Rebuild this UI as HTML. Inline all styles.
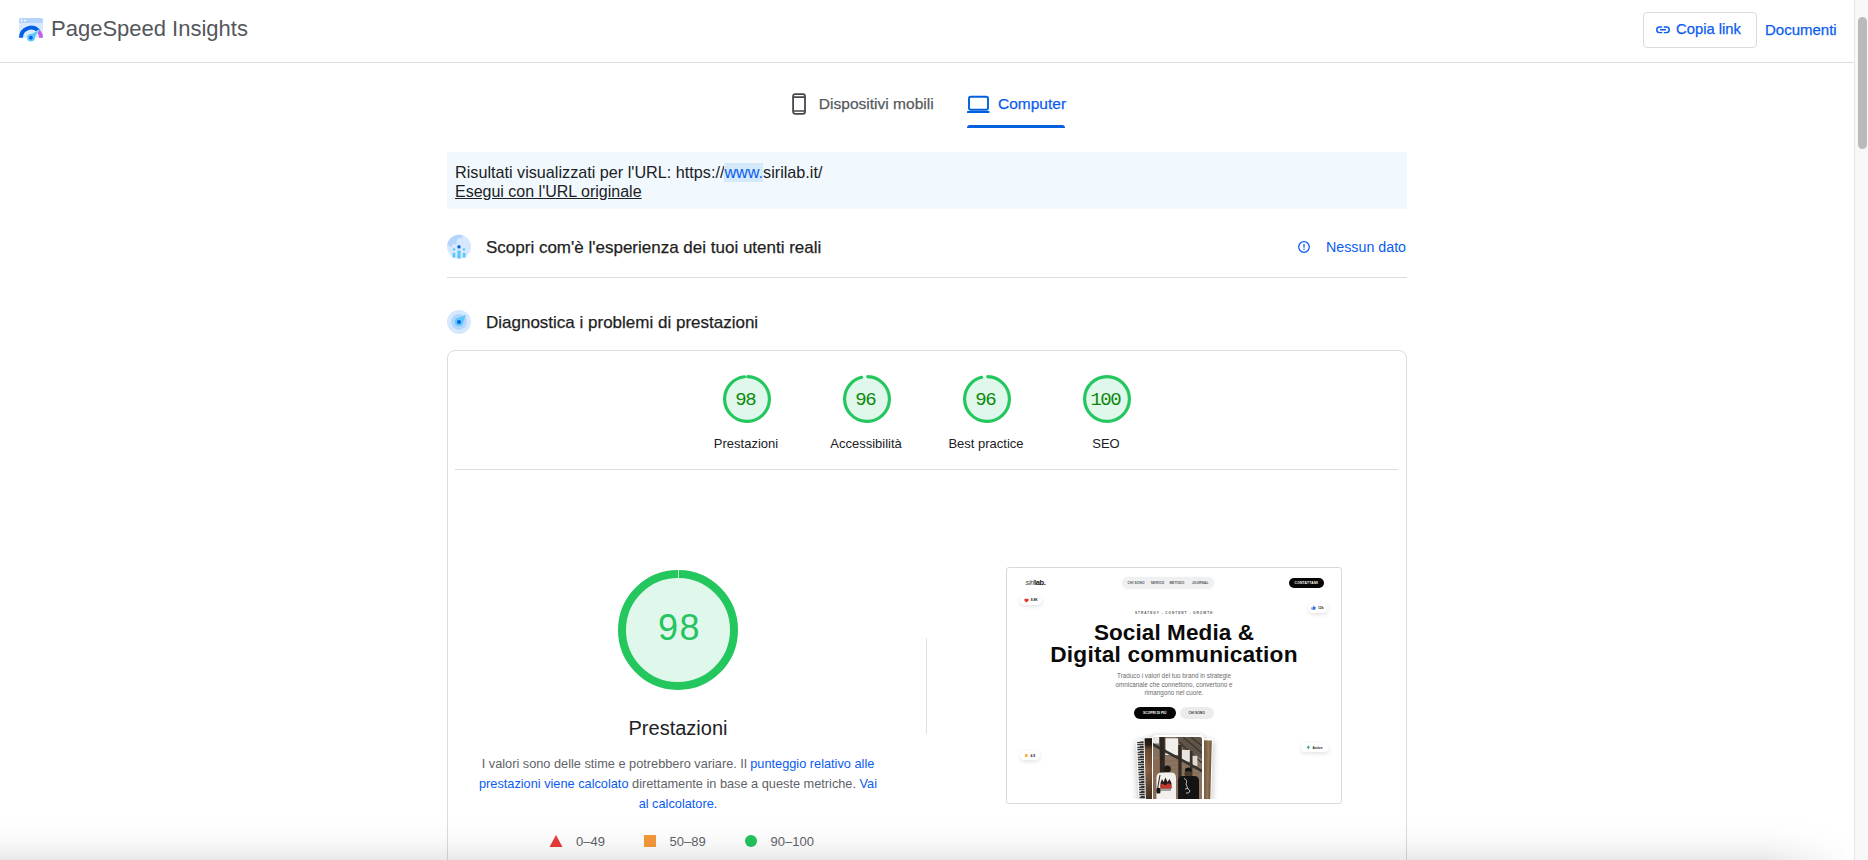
<!DOCTYPE html>
<html><head><meta charset="utf-8">
<style>
*{box-sizing:border-box;margin:0;padding:0}
html,body{width:1868px;height:860px;overflow:hidden;background:#fff;font-family:"Liberation Sans",sans-serif;position:relative}
.a{position:absolute;white-space:nowrap;line-height:1}
.blue{color:#0a5cf0}
.med{-webkit-text-stroke:0.25px currentColor}
#hdr{position:absolute;left:0;top:0;width:1854px;height:63px;border-bottom:1px solid #dadce0}
#sb{position:absolute;left:1854px;top:0;width:14px;height:860px;background:#f8f8f8;border-left:1px solid #e6e6e6}
#thumb{position:absolute;left:3px;top:17px;width:8.5px;height:132px;background:#bababa;border-radius:4.5px}
#urlbox{position:absolute;left:447px;top:152px;width:960px;height:57px;background:#f1f9fe}
.hr{position:absolute;height:1px;background:#dadce0}
#card{position:absolute;left:447px;top:350px;width:960px;height:600px;border:1px solid #dadce0;border-radius:8px}
.glabel{position:absolute;font-size:13px;color:#202124;text-align:center;width:120px;line-height:1}
.gnum{position:absolute;font-family:"Liberation Mono",monospace;font-size:19px;color:#0a880a;text-align:center;width:60px;line-height:1;letter-spacing:-1.5px;text-indent:-1.5px}
</style></head><body>

<div id="hdr"></div>
<!-- logo -->
<svg class="a" style="left:14px;top:12px" width="36" height="36" viewBox="0 0 36 36">
  <path d="M5 25.7 V8 A2 2 0 0 1 7 6 H27 A2 2 0 0 1 29 8 V25.7 Z" fill="#d9e9fd"/>
  <path d="M5 11 V8 A2 2 0 0 1 7 6 H27 A2 2 0 0 1 29 8 V11 Z" fill="#b4d5fb"/>
  <circle cx="7.6" cy="8.5" r="0.9" fill="#fff"/>
  <rect x="10.2" y="7.8" width="1.8" height="1.5" fill="#fff"/>
  <path d="M7 25.7 A10 10 0 0 1 27 25.7" stroke="#f0f7ff" stroke-width="5.4" fill="none"/>
  <path d="M7 25.7 A10 10 0 0 1 24.66 19.27" stroke="#0360e8" stroke-width="4" fill="none"/>
  <path d="M24.66 19.27 A10 10 0 0 1 27 25.7" stroke="#c05cf0" stroke-width="4" fill="none"/>
  <path d="M14.3 23.6 L24.9 17.8 L20 28 Z" fill="#5ac8fa" stroke="#f0f7ff" stroke-width="0.5"/>
  <circle cx="16.9" cy="25.7" r="3.8" fill="#5ac8fa"/>
  <circle cx="16.9" cy="25.7" r="1.9" fill="#0360e8"/>
</svg>
<div class="a" style="left:51px;top:17.8px;font-size:22px;color:#53575c">PageSpeed Insights</div>

<!-- copia link -->
<div style="position:absolute;left:1643px;top:12px;width:114px;height:36px;border:1px solid #dadce0;border-radius:4px"></div>
<svg class="a" style="left:1655px;top:24px" width="16" height="12" viewBox="0 0 16 12">
  <path d="M7.2 2.9 H4.6 A2.85 2.85 0 0 0 4.6 8.6 H7.2 M8.8 2.9 H11.4 A2.85 2.85 0 0 1 11.4 8.6 H8.8" stroke="#0a5cf0" stroke-width="1.45" fill="none"/>
  <rect x="5" y="5.05" width="6" height="1.5" rx="0.2" fill="#0a5cf0"/>
</svg>
<div class="a blue med" style="left:1676px;top:22.4px;font-size:14.8px">Copia link</div>
<div class="a blue med" style="left:1765px;top:21.6px;font-size:15px">Documenti</div>

<div id="sb"><div id="thumb"></div></div>

<!-- tabs -->
<svg class="a" style="left:790px;top:92px" width="18" height="24" viewBox="0 0 18 24">
  <rect x="3.1" y="2.1" width="11.9" height="19.7" rx="2" stroke="#44474e" stroke-width="1.8" fill="none"/>
  <path d="M3.1 5.1 H15 M3.1 19 H15" stroke="#44474e" stroke-width="1.6"/>
</svg>
<div class="a med" style="left:818.8px;top:95.8px;font-size:15.55px;color:#55595e">Dispositivi mobili</div>
<svg class="a" style="left:965px;top:94px" width="28" height="22" viewBox="0 0 28 22">
  <rect x="4" y="2.8" width="19" height="12.9" rx="1.6" stroke="#0360dc" stroke-width="1.9" fill="none"/>
  <rect x="2" y="17" width="22.5" height="2" rx="0.6" fill="#0360dc"/>
</svg>
<div class="a blue med" style="left:998px;top:95.8px;font-size:15.5px">Computer</div>
<div style="position:absolute;left:967px;top:125px;width:98px;height:3px;background:#0360dc;border-radius:3px 3px 0 0"></div>

<!-- url box -->
<div id="urlbox"></div>
<div class="a" style="left:455px;top:163.8px;font-size:16.2px;color:#202124">Risultati visualizzati per l'URL: https://<span style="background:#d4eafa;color:#0a5cf0;padding-bottom:1px">www.</span>sirilab.it/</div>
<div class="a" style="left:455px;top:184.2px;font-size:16px;color:#202124;text-decoration:underline">Esegui con l'URL originale</div>

<!-- section 1 -->
<svg class="a" style="left:443px;top:231px" width="32" height="32" viewBox="0 0 32 32">
  <circle cx="16" cy="15.8" r="12" fill="#d6e8fd"/>
  <path d="M4.3 13.5 A12 12 0 0 1 20.3 4.6 L18.8 6.6 L14 8.2 L13.3 13.2 L9.4 13.3 L8.4 16.8 Z" fill="#b3d5fb"/>
  <g stroke="#e4effd" stroke-width="0.7">
  <circle cx="16" cy="15.9" r="2.1" fill="#0360e8"/>
  <circle cx="11" cy="18.35" r="1.65" fill="#5ac8fa"/>
  <circle cx="21" cy="18.35" r="1.65" fill="#5ac8fa"/>
  <rect x="14" y="19.1" width="4" height="8.7" fill="#5ac8fa"/>
  <rect x="9.1" y="21.3" width="3.7" height="5.6" fill="#5ac8fa"/>
  <rect x="19.2" y="21.3" width="3.7" height="5.6" fill="#5ac8fa"/>
  </g>
</svg>
<div class="a med" style="left:486px;top:239.4px;font-size:17px;color:#1f1f1f">Scopri com'è l'esperienza dei tuoi utenti reali</div>
<svg class="a" style="left:1296px;top:239px" width="16" height="16" viewBox="0 0 16 16">
  <circle cx="8" cy="8" r="5.3" stroke="#0a5cf0" stroke-width="1.3" fill="none"/>
  <rect x="7.35" y="5" width="1.3" height="3.6" fill="#0a5cf0"/>
  <rect x="7.35" y="9.6" width="1.3" height="1.3" fill="#0a5cf0"/>
</svg>
<div class="a blue" style="left:1326px;top:239.9px;font-size:14.25px">Nessun dato</div>
<div class="hr" style="left:447px;top:277px;width:960px"></div>

<!-- section 2 -->
<svg class="a" style="left:443px;top:306px" width="32" height="32" viewBox="0 0 32 32">
  <circle cx="16" cy="15.9" r="12" fill="#d6e8fd"/>
  <circle cx="16" cy="15.9" r="7.9" fill="#b3d5fb"/>
  <path d="M23 8.8 L19.6 17.8 L14.2 12.4 Z" fill="#5ac8fa"/>
  <circle cx="16" cy="15.9" r="4.1" fill="#5ac8fa"/>
  <circle cx="16" cy="15.9" r="2" fill="#0360e8"/>
</svg>
<div class="a med" style="left:486px;top:314.4px;font-size:17px;color:#1f1f1f">Diagnostica i problemi di prestazioni</div>

<!-- card -->
<div id="card"></div>

<!-- small gauges -->
<svg class="a" style="left:722.6px;top:375px" width="48" height="48" viewBox="0 0 120 120">
  <circle cx="60" cy="60" r="56" fill="#e0f8eb"/>
  <circle cx="60" cy="60" r="56" stroke="#24c65e" stroke-width="8" fill="none" stroke-dasharray="340.82 351.86" stroke-linecap="round" transform="rotate(-87.954 60 60)"/>
</svg>
<div class="gnum" style="left:716px;top:390.6px">98</div>
<div class="glabel" style="left:686px;top:437px">Prestazioni</div>

<svg class="a" style="left:842.6px;top:375px" width="48" height="48" viewBox="0 0 120 120">
  <circle cx="60" cy="60" r="56" fill="#e0f8eb"/>
  <circle cx="60" cy="60" r="56" stroke="#24c65e" stroke-width="8" fill="none" stroke-dasharray="333.78 351.86" stroke-linecap="round" transform="rotate(-87.954 60 60)"/>
</svg>
<div class="gnum" style="left:836px;top:390.6px">96</div>
<div class="glabel" style="left:806px;top:437px">Accessibilità</div>

<svg class="a" style="left:962.6px;top:375px" width="48" height="48" viewBox="0 0 120 120">
  <circle cx="60" cy="60" r="56" fill="#e0f8eb"/>
  <circle cx="60" cy="60" r="56" stroke="#24c65e" stroke-width="8" fill="none" stroke-dasharray="333.78 351.86" stroke-linecap="round" transform="rotate(-87.954 60 60)"/>
</svg>
<div class="gnum" style="left:956px;top:390.6px">96</div>
<div class="glabel" style="left:926px;top:437px">Best practice</div>

<svg class="a" style="left:1082.6px;top:375px" width="48" height="48" viewBox="0 0 120 120">
  <circle cx="60" cy="60" r="56" fill="#e0f8eb"/>
  <circle cx="60" cy="60" r="56" stroke="#24c65e" stroke-width="8" fill="none"/>
</svg>
<div class="gnum" style="left:1076px;top:390.6px">100</div>
<div class="glabel" style="left:1046px;top:437px">SEO</div>

<div class="hr" style="left:455px;top:469px;width:943px"></div>

<!-- big gauge -->
<svg class="a" style="left:618.3px;top:570.3px" width="120" height="120" viewBox="0 0 120 120">
  <circle cx="60" cy="60" r="56" fill="#e0f8eb"/>
  <circle cx="60" cy="60" r="56" stroke="#24c65e" stroke-width="8" fill="none" stroke-dasharray="350.5 351.86" transform="rotate(-89.1 60 60)"/>
</svg>
<div class="a" style="left:578.8px;top:610px;width:200px;text-align:center;font-size:36px;color:#26c460;letter-spacing:1.6px;text-indent:1.6px">98</div>
<div class="a" style="left:578px;top:718.2px;width:200px;text-align:center;font-size:20px;color:#202124">Prestazioni</div>
<div class="a" style="left:428px;top:753.6px;width:500px;text-align:center;font-size:12.75px;line-height:20px;color:#5f6368;white-space:normal">I valori sono delle stime e potrebbero variare. Il <span class="blue">punteggio relativo alle</span><br><span class="blue">prestazioni viene calcolato</span> direttamente in base a queste metriche. <span class="blue">Vai</span><br><span class="blue">al calcolatore.</span></div>

<!-- legend -->
<svg class="a" style="left:549px;top:834px" width="14" height="14" viewBox="0 0 14 14"><path d="M7 1 L13.5 13 H0.5 Z" fill="#eb3a3a"/></svg>
<div class="a" style="left:576px;top:834.5px;font-size:13px;color:#5f6368">0–49</div>
<div style="position:absolute;left:644px;top:835px;width:12px;height:12px;background:#f6993a"></div>
<div class="a" style="left:669.5px;top:834.5px;font-size:13px;color:#5f6368">50–89</div>
<div style="position:absolute;left:745px;top:835px;width:12px;height:12px;border-radius:50%;background:#22c55e"></div>
<div class="a" style="left:770.5px;top:834.5px;font-size:13px;color:#5f6368">90–100</div>

<div style="position:absolute;left:926px;top:637.5px;width:1px;height:96.5px;background:#e0e0e0"></div>

<!-- screenshot thumbnail -->
<div id="shot" style="position:absolute;left:1006px;top:567px;width:336px;height:237px;border:1px solid #d9d9d9;border-radius:3px;overflow:hidden;background:#fff">
 <div style="position:absolute;left:0;top:0;width:334px;height:235px;overflow:hidden">
  <div class="a" style="left:18.5px;top:10.5px;font-size:7.5px;color:#111;letter-spacing:-0.3px"><i style="font-weight:normal;color:#444">siri</i><b>lab.</b></div>
  <div style="position:absolute;left:114.5px;top:9px;width:92px;height:11.5px;background:#eef0f2;border-radius:6px;box-shadow:0 0 3px rgba(0,0,0,0.04)"></div>
  <div class="a" style="left:120.5px;top:14.2px;font-size:3.3px;color:#555;font-weight:bold;letter-spacing:0.1px">CHI SONO</div>
  <div class="a" style="left:143.8px;top:14.2px;font-size:3.3px;color:#555;font-weight:bold;letter-spacing:0.1px">SERVIZI</div>
  <div class="a" style="left:162.5px;top:14.2px;font-size:3.3px;color:#555;font-weight:bold;letter-spacing:0.1px">METODO</div>
  <div class="a" style="left:184.9px;top:14.2px;font-size:3.3px;color:#555;font-weight:bold;letter-spacing:0.1px">JOURNAL</div>
  <div style="position:absolute;left:281.5px;top:9.7px;width:35.5px;height:10px;background:#050505;border-radius:5px"></div>
  <div class="a" style="left:287.5px;top:14px;font-size:3.3px;color:#fff;font-weight:bold;letter-spacing:0.25px">CONTATTAMI</div>
  <div style="position:absolute;left:12.7px;top:27.1px;width:22.7px;height:10.3px;background:#fff;border-radius:5px;box-shadow:0 1.5px 4px rgba(0,0,0,0.12)"></div>
  <svg class="a" style="left:16.8px;top:29.8px" width="5" height="5" viewBox="0 0 10 10"><path d="M5 9.2 L1.2 5.4 A2.4 2.4 0 0 1 5 2.2 A2.4 2.4 0 0 1 8.8 5.4 Z" fill="#e0352b"/></svg>
  <div class="a" style="left:23.7px;top:31.4px;font-size:3.3px;color:#222;font-weight:bold">8.8K</div>
  <div style="position:absolute;left:300.8px;top:35px;width:20.6px;height:10px;background:#fff;border-radius:5px;box-shadow:0 1.5px 4px rgba(0,0,0,0.12)"></div>
  <svg class="a" style="left:304.3px;top:37.4px" width="5" height="5" viewBox="0 0 10 10"><path d="M1 4.5 H3 V9.5 H1 Z M3.8 4.5 L5.8 0.8 Q7 0.8 6.8 2.5 L6.4 4 H8.8 Q9.6 4.2 9.4 5 L8.4 8.9 Q8.2 9.5 7.5 9.5 H3.8 Z" fill="#2f6fe4"/></svg>
  <div class="a" style="left:311px;top:38.5px;font-size:3.3px;color:#222;font-weight:bold">12k</div>
  <div class="a" style="left:128px;top:43.5px;font-size:3.2px;color:#555;font-weight:bold;letter-spacing:0.95px">STRATEGY - CONTENT - GROWTH</div>
  <div class="a" style="left:0;top:54.4px;width:334px;text-align:center;font-size:22.5px;font-weight:bold;color:#0a0a0a;letter-spacing:0.1px">Social Media &amp;</div>
  <div class="a" style="left:0;top:75px;width:334px;text-align:center;font-size:22.7px;font-weight:bold;color:#0a0a0a;letter-spacing:0.2px">Digital communication</div>
  <div class="a" style="left:0;top:105.3px;width:334px;text-align:center;font-size:6.3px;color:#6b6b6b">Traduco i valori del tuo brand in strategie</div>
  <div class="a" style="left:0;top:114px;width:334px;text-align:center;font-size:6.3px;color:#6b6b6b">omnicanale che connettono, convertono e</div>
  <div class="a" style="left:0;top:122.1px;width:334px;text-align:center;font-size:6.3px;color:#6b6b6b">rimangono nel cuore.</div>
  <div style="position:absolute;left:126.5px;top:138.5px;width:42.5px;height:12.5px;background:#050505;border-radius:6.5px"></div>
  <div class="a" style="left:126.5px;top:143.8px;width:42.5px;text-align:center;font-size:3.3px;color:#fff;font-weight:bold">SCOPRI DI PIÙ</div>
  <div style="position:absolute;left:172.6px;top:138.5px;width:34px;height:12.5px;background:#ececec;border-radius:6.5px"></div>
  <div class="a" style="left:172.6px;top:143.8px;width:34px;text-align:center;font-size:3.3px;color:#333;font-weight:bold">CHI SONO</div>
  <div style="position:absolute;left:12.8px;top:183.2px;width:20.3px;height:8.8px;background:#fff;border-radius:4.5px;box-shadow:0 1.5px 4px rgba(0,0,0,0.12)"></div>
  <svg class="a" style="left:16.8px;top:185.4px" width="4.6" height="4.6" viewBox="0 0 10 10"><path d="M5 0.5 L6.3 3.6 L9.6 3.8 L7.1 6 L7.9 9.3 L5 7.5 L2.1 9.3 L2.9 6 L0.4 3.8 L3.7 3.6 Z" fill="#f5a00f"/></svg>
  <div class="a" style="left:23.4px;top:186.7px;font-size:3.3px;color:#222;font-weight:bold">4.9</div>
  <div style="position:absolute;left:294.2px;top:175.2px;width:27.7px;height:8.9px;background:#fff;border-radius:4.5px;box-shadow:0 1.5px 4px rgba(0,0,0,0.12)"></div>
  <svg class="a" style="left:299px;top:177.4px" width="4.6" height="4.8" viewBox="0 0 10 10"><path d="M6 0 L1 5.8 H4.6 L3.6 10 L9 3.8 H5.4 Z" fill="#1e9e5a"/></svg>
  <div class="a" style="left:305.6px;top:179.1px;font-size:3.3px;color:#222;font-weight:bold">Active</div>
  <!-- cards -->
  <div style="position:absolute;left:132px;top:170.6px;width:28px;height:70px;background:#fff;border-radius:3.5px;box-shadow:-1px 2px 6px rgba(0,0,0,0.22);transform:rotate(-2.5deg);transform-origin:50% 100%;overflow:hidden">
    <div style="position:absolute;left:1.3px;top:1.5px;width:7px;height:70px;background:repeating-linear-gradient(to bottom,#3a3a3a 0,#3a3a3a 1.2px,#bdbdbd 1.2px,#bdbdbd 2.5px)"></div>
  </div>
  <div style="position:absolute;left:137.8px;top:169.4px;width:30px;height:70px;background:#fff;border-radius:3.5px;box-shadow:-1px 2px 6px rgba(0,0,0,0.22);transform:rotate(-1.2deg);transform-origin:50% 100%;overflow:hidden">
    <div style="position:absolute;left:1.3px;top:1.3px;width:28px;height:70px;background:linear-gradient(to bottom,#1e1a16 0,#2a2018 9%,#6d4c34 16%,#8a6446 45%,#5a3e2a 75%,#3a2a1e 100%)"></div>
  </div>
  <div style="position:absolute;left:173.5px;top:170.4px;width:30px;height:70px;background:#fff;border-radius:3.5px;box-shadow:1px 2px 6px rgba(0,0,0,0.22);transform:rotate(1.5deg);transform-origin:50% 100%;overflow:hidden">
    <div style="position:absolute;left:1.3px;top:1.5px;width:27.5px;height:70px;background:linear-gradient(to right,#4a3826,#7c5f44 70%,#9a7a58 90%,#6a5038)"></div>
  </div>
  <div style="position:absolute;left:144.8px;top:167.4px;width:52.3px;height:70px;background:#fff;border-radius:4px;box-shadow:0 2px 7px rgba(0,0,0,0.28);overflow:hidden">
    <svg style="position:absolute;left:1.7px;top:1.7px;border-radius:3px 3px 0 0" width="49" height="62" viewBox="0 0 49 62">
      <rect width="49" height="62" fill="#86705e"/>
      <rect x="0" y="20" width="49" height="42" fill="#8c7460"/>
      <path d="M0 24 H49 M0 28 H49 M0 32 H49 M0 36 H49 M0 40 H49 M0 44 H49 M0 48 H49" stroke="#6e5848" stroke-width="0.6" opacity="0.6"/>
      <path d="M23 0 H49 V22 L30 12 Z" fill="#5f5448"/>
      <path d="M30 0 L49 16 M38 0 L49 9 M26 5 L49 26" stroke="#3a342e" stroke-width="1.2"/>
      <rect x="0" y="0" width="6" height="6.5" fill="#e9e8e4"/>
      <rect x="12.6" y="1.3" width="12.5" height="16.7" fill="#f0efec"/>
      <rect x="28.9" y="13" width="8" height="11.7" fill="#e6e5e1"/>
      <rect x="39.4" y="18.8" width="5" height="10.1" fill="#dcdad6"/>
      <path d="M0 6 L49 32.5 L49 35.5 L0 9 Z" fill="#34322e"/>
      <rect x="6.7" y="0" width="5" height="36" fill="#2a2624"/>
      <rect x="25.3" y="8" width="3.3" height="42" fill="#332a24"/>
      <rect x="36.9" y="14" width="2.5" height="30" fill="#3a3028"/>
      <rect x="0" y="22" width="6.5" height="40" fill="#8a6a52"/>
      <circle cx="14.3" cy="32" r="3.6" fill="#1c1714"/>
      <path d="M3.4 62 V41 Q3.4 35.6 9 35.6 H18 Q23 35.6 23 41 V62 Z" fill="#f1f0ec"/>
      <path d="M7.5 51.5 V46 L9 42 L10.5 45 L12.5 40.5 L14.5 45 L16.5 42 L18.4 46 V51.5 Z" fill="#2a1a18"/>
      <path d="M7.5 51.5 V48 L9.5 46.5 L12.5 48.5 L15 46 L18.4 48 V51.5 Z" fill="#c0392b"/>
      <rect x="8" y="52.5" width="10" height="1" fill="#555"/>
      <path d="M7 38 L4.5 52" stroke="#111" stroke-width="0.9"/>
      <rect x="3.4" y="50.7" width="4.1" height="5.8" rx="1.5" fill="#151515"/>
      <path d="M31.8 34.8 Q31.8 30.6 35.2 30.6 Q38.5 30.6 38.5 34.8 Z" fill="#111"/>
      <rect x="31.5" y="34.4" width="7" height="5" rx="2" fill="#4a3a2e"/>
      <path d="M25.1 62 V44 Q25.1 38.9 30 38.9 H41 Q46 38.9 46 44 V62 Z" fill="#141414"/>
      <path d="M31 41.5 Q35 43 33 47 L35 52 M32 52 Q35 50 37 54 Q36 57 33 56" stroke="#cfcfcf" stroke-width="0.9" fill="none"/>
    </svg>
  </div>
  <div style="position:absolute;left:120px;top:230.6px;width:100px;height:10px;background:#fff"></div>
 </div>
</div>

<!-- bottom shadow -->
<div style="position:absolute;left:0;top:818px;width:1854px;height:42px;background:linear-gradient(to bottom,rgba(0,0,0,0) 0%,rgba(0,0,0,0.01) 35%,rgba(0,0,0,0.03) 60%,rgba(0,0,0,0.06) 82%,rgba(0,0,0,0.09) 100%);-webkit-mask-image:linear-gradient(to right,#000 0,#000 1765px,rgba(0,0,0,0) 1854px)"></div>
</body></html>
